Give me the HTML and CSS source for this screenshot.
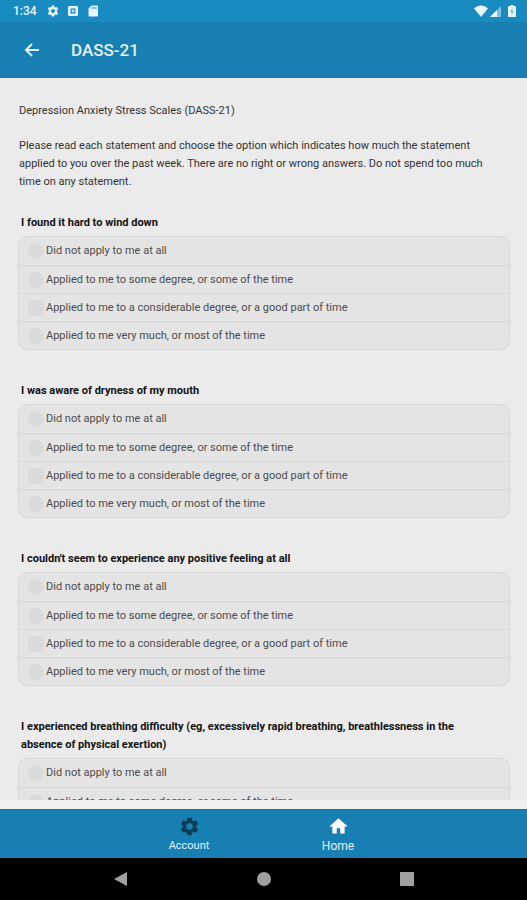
FILE: index.html
```html
<!DOCTYPE html>
<html lang="en">
<head>
<meta charset="utf-8">
<meta name="viewport" content="width=device-width, initial-scale=1">
<title>DASS-21</title>
<link rel="stylesheet" href="styles.css">
</head>
<body>
<div class="status">
  <div class="status-group">
    <span class="clock">1:34</span>
    <svg class="status-icon" viewBox="0 0 24 24"><path fill-rule="evenodd" d="M9.6 1h4.8l.6 3 2 1.100 3-1 2.400 4-2.300 2v3.800l2.300 2-2.400 4-3-1-2 1.100-.6 3H9.600l-.6-3-2-1.100-3 1-2.400-4 2.300-2v-3.800l-2.300-2 2.400-4 3 1 2-1.100zM12 8a4 4 0 1 0 0 8 4 4 0 0 0 0-8z"/></svg>
    <svg class="status-icon" viewBox="0 0 24 24"><path fill-rule="evenodd" d="M5 2h14a3 3 0 0 1 3 3v14a3 3 0 0 1-3 3H5a3 3 0 0 1-3-3V5a3 3 0 0 1 3-3zm2 5v10h10V7zm5 1 1.300 2.700L16 12l-2.700 1.300L12 16l-1.300-2.700L8 12l2.700-1.300z"/></svg>
    <svg class="status-icon" viewBox="0 0 24 24"><path fill-rule="evenodd" d="M9 1h11a2 2 0 0 1 2 2v18a2 2 0 0 1-2 2H5a2 2 0 0 1-2-2V7zm0 3v4h2V4zm4 0v4h2V4zm4 0v4h2V4z"/></svg>
  </div>
  <div class="status-group signals">
    <svg class="wifi" viewBox="0 0 14 12"><path d="M0 3.500C4-.4 10-.4 14 3.500L7 12z"/></svg>
    <svg class="signal" viewBox="0 0 12 12"><path opacity=".5" d="M0 12 11 1v11z"/><path d="M0 12l7-7v7z"/></svg>
    <svg class="battery" viewBox="0 0 8 12"><path d="M2.500 0h3v1H7q1 0 1 1v9q0 1-1 1H1q-1 0-1-1V2q0-1 1-1h1.500z"/><path class="bolt" d="M4.500 3 2 7h1.500v3L6 6H4.500z"/></svg>
  </div>
</div>
<header class="appbar">
  <button class="back" type="button" aria-label="Back">
    <svg viewBox="0 0 16 16"><path d="M15 8H2M8 2 2 8l6 6"/></svg>
  </button>
  <h1>DASS-21</h1>
</header>
<main class="content">
  <p class="intro">Depression Anxiety Stress Scales (DASS-21)</p>
  <p class="intro">Please read each statement and choose the option which indicates how much the statement applied to you over the past week. There are no right or wrong answers. Do not spend too much time on any statement.</p>
  <fieldset class="question">
    <legend>I found it hard to wind down</legend>
    <div class="options">
      <label><input type="radio" name="q1">Did not apply to me at all</label>
      <label><input type="radio" name="q1">Applied to me to some degree, or some of the time</label>
      <label><input type="radio" name="q1">Applied to me to a considerable degree, or a good part of time</label>
      <label><input type="radio" name="q1">Applied to me very much, or most of the time</label>
    </div>
  </fieldset>
  <fieldset class="question">
    <legend>I was aware of dryness of my mouth</legend>
    <div class="options">
      <label><input type="radio" name="q2">Did not apply to me at all</label>
      <label><input type="radio" name="q2">Applied to me to some degree, or some of the time</label>
      <label><input type="radio" name="q2">Applied to me to a considerable degree, or a good part of time</label>
      <label><input type="radio" name="q2">Applied to me very much, or most of the time</label>
    </div>
  </fieldset>
  <fieldset class="question">
    <legend>I couldn't seem to experience any positive feeling at all</legend>
    <div class="options">
      <label><input type="radio" name="q3">Did not apply to me at all</label>
      <label><input type="radio" name="q3">Applied to me to some degree, or some of the time</label>
      <label><input type="radio" name="q3">Applied to me to a considerable degree, or a good part of time</label>
      <label><input type="radio" name="q3">Applied to me very much, or most of the time</label>
    </div>
  </fieldset>
  <fieldset class="question">
    <legend>I experienced breathing difficulty (eg, excessively rapid breathing, breathlessness in the absence of physical exertion)</legend>
    <div class="options">
      <label><input type="radio" name="q4">Did not apply to me at all</label>
      <label><input type="radio" name="q4">Applied to me to some degree, or some of the time</label>
    </div>
  </fieldset>
</main>
<nav class="tabs">
  <a class="tab" href="#account">
    <svg class="gear" viewBox="0 0 24 24"><path fill-rule="evenodd" d="M9.600 2h4.800l.5 2.800 1.900 1.100 2.700-1 2.400 4.100-2.200 1.800v2.400l2.200 1.800-2.400 4.100-2.700-1-1.900 1.100-.5 2.800H9.600l-.5-2.800-1.900-1.100-2.700 1L2.100 15l2.200-1.800v-2.400L2.100 9l2.400-4.100 2.700 1 1.900-1.100zM12 8.200a3.800 3.800 0 1 0 0 7.600 3.800 3.800 0 0 0 0-7.600z"/></svg>
    <span>Account</span>
  </a>
  <a class="tab home" href="#home">
    <svg viewBox="0 0 24 24"><path d="M10 20v-6h4v6h5v-8h3.500L12 2.500 1.500 12H5v8z"/></svg>
    <span>Home</span>
  </a>
</nav>
<div class="system">
  <button type="button" aria-label="Back"><svg viewBox="0 0 16 16"><path d="M14 1v14L1 8z"/></svg></button>
  <button type="button" aria-label="Home"><svg viewBox="0 0 16 16"><circle cx="8" cy="8" r="7"/></svg></button>
  <button type="button" aria-label="Recent apps"><svg viewBox="0 0 16 16"><path d="M1 1h14v14H1z"/></svg></button>
</div>
</body>
</html>
```
FILE: styles.css
```css
* { box-sizing: border-box; }
body {
  margin: 0;
  height: 100vh;
  display: flex;
  flex-direction: column;
  background: #efefef;
  color: #333;
  font: 11px/18px Roboto, sans-serif;
}
svg { display: block; }
button {
  border: 0;
  padding: 0;
  background: none;
}
.status {
  flex: none;
  display: flex;
  justify-content: space-between;
  align-items: center;
  height: 22px;
  padding: 0 11px 0 13px;
  background: #188bc0;
  color: #e8f5fc;
  fill: #e8f5fc;
}
.status-group {
  display: flex;
  align-items: center;
  gap: 8px;
}
.clock {
  margin-right: 2px;
  font-size: 12px;
  font-weight: 500;
}
.status-icon { width: 12px; height: 12px; }
.signals { gap: 2px; }
.wifi { width: 14px; height: 12px; }
.signal { width: 12px; height: 12px; }
.battery { width: 8px; height: 12px; margin-left: 4px; }
.bolt { fill: #7dbbdb; }
.appbar {
  flex: none;
  display: flex;
  align-items: center;
  gap: 31px;
  height: 56px;
  padding: 0 24px;
  background: #177fb1;
  border-bottom: 1px solid #1478a8;
  color: #e4f2f9;
}
.back svg {
  width: 16px;
  height: 16px;
  fill: none;
  stroke: #e4f2f9;
  stroke-width: 2;
}
h1 {
  margin: 0;
  font-size: 17px;
  line-height: 24px;
  font-weight: 500;
}
.content {
  flex: 1;
  min-height: 0;
  overflow-y: auto;
  scrollbar-width: none;
  margin-bottom: 9px;
  padding: 24px 17px 0 18px;
  background: #ebebeb;
}
.intro {
  margin: 0 0 17px;
  padding: 0 12px 0 1px;
}
.question {
  min-width: 0;
  margin: 0 0 32px;
  padding: 0;
  border: 0;
}
.intro + .question { margin-top: 23px; }
legend {
  padding: 0 20px 0 3px;
  margin-bottom: 4px;
  color: #111;
  font-weight: 700;
}
.options {
  border: 1px solid #d8d8d8;
  border-radius: 9px;
  background: #e4e4e4;
}
.options label {
  display: flex;
  align-items: center;
  gap: 2px;
  height: 28px;
  padding: 0 9px;
  color: #4c4c4c;
}
.options label + label { border-top: 1px solid #d8d8d8; }
.options input {
  appearance: none;
  flex: none;
  width: 16px;
  height: 16px;
  margin: 0;
  border-radius: 50%;
  background: #dadada;
}
.options input:checked { background: #177fb1; }
.tabs {
  flex: none;
  display: flex;
  justify-content: center;
  height: 49px;
  background: #177fb1;
  border-top: 1px solid #1478a8;
}
.tab {
  display: flex;
  flex-direction: column;
  align-items: center;
  width: 149px;
  padding-top: 6px;
  color: #e4f2f9;
  fill: #fff;
  text-decoration: none;
}
.tab svg { width: 21px; height: 21px; }
.tab .gear { fill: #0d3d57; }
.home { font-size: 12px; }
.system {
  flex: none;
  display: flex;
  justify-content: center;
  align-items: center;
  height: 42px;
  background: #000;
}
.system button { width: 143px; }
.system svg {
  width: 16px;
  height: 16px;
  margin: 0 auto;
  fill: #a0a0a0;
}
```
